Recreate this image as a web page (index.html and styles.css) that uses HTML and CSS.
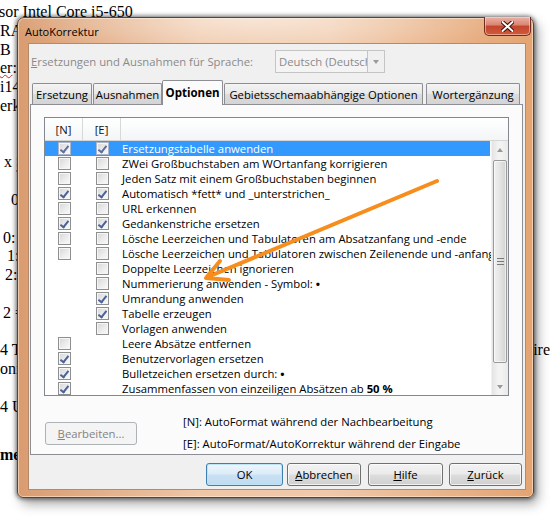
FILE: index.html
```html
<!DOCTYPE html>
<html lang="de">
<head>
<meta charset="utf-8">
<title>AutoKorrektur</title>
<link rel="stylesheet" href="styles.css">
</head>
<body>
<div class="doc">
  <p class="in-1">sor Intel Core i5-650</p>
  <p>RAM</p>
  <p>B&nbsp;&nbsp;I</p>
  <p><span class="wavy">er</span>:</p>
  <p>i14</p>
  <p>erk</p>
  <p></p>
  <p></p>
  <p class="in4">x <span class="wavy">S</span></p>
  <p></p>
  <p class="in11">0</p>
  <p></p>
  <p class="in3">0:</p>
  <p class="in7">1:</p>
  <p class="in5">2:</p>
  <p></p>
  <p class="in3">2 =</p>
  <p></p>
  <p class="split"><span>4 T</span><span>ire</span></p>
  <p>oni</p>
  <p></p>
  <p>4 U</p>
  <p></p>
  <p class="bold">me</p>
</div>

<div class="win">
  <div class="titlebar">
    <span class="title">AutoKorrektur</span>
    <span class="close">
      <svg width="13" height="11" viewBox="0 0 13 11"><path d="M1.5 1 L11.5 10 M11.5 1 L1.5 10" stroke="#3a1008" stroke-width="4" stroke-linecap="round"/><path d="M1.5 1 L11.5 10 M11.5 1 L1.5 10" stroke="#fff" stroke-width="2" stroke-linecap="round"/></svg>
    </span>
  </div>
  <div class="client">
    <div class="langrow">
      <span class="lbl"><u>E</u>rsetzungen und Ausnahmen für Sprache:</span>
      <div class="combo"><span class="ctext">Deutsch (Deutsch</span><span class="drop"><i class="tri-down"></i></span></div>
    </div>
    <div class="tabs">
      <span class="tab t1">Ersetzung</span>
      <span class="tab t2">Ausnahmen</span>
      <span class="tab t3 active">Optionen</span>
      <span class="tab t4">Gebietsschemaabhängige Optionen</span>
      <span class="tab t5">Wortergänzung</span>
    </div>
    <div class="panel">
      <div class="list">
        <div class="lhead"><span class="hc">[N]</span><span class="hc">[E]</span><span class="hrest"></span></div>
        <div class="lbody">
          <div class="rows">
            <div class="row sel"><span class="c"><i class="cb on"></i></span><span class="c"><i class="cb on"></i></span><span class="t">Ersetzungstabelle anwenden</span></div>
            <div class="row"><span class="c"><i class="cb"></i></span><span class="c"><i class="cb"></i></span><span class="t">ZWei Großbuchstaben am WOrtanfang korrigieren</span></div>
            <div class="row"><span class="c"><i class="cb"></i></span><span class="c"><i class="cb"></i></span><span class="t">Jeden Satz mit einem Großbuchstaben beginnen</span></div>
            <div class="row"><span class="c"><i class="cb on"></i></span><span class="c"><i class="cb on"></i></span><span class="t">Automatisch *fett* und _unterstrichen_</span></div>
            <div class="row"><span class="c"><i class="cb"></i></span><span class="c"><i class="cb"></i></span><span class="t">URL erkennen</span></div>
            <div class="row"><span class="c"><i class="cb on"></i></span><span class="c"><i class="cb on"></i></span><span class="t">Gedankenstriche ersetzen</span></div>
            <div class="row"><span class="c"><i class="cb"></i></span><span class="c"><i class="cb"></i></span><span class="t">Lösche Leerzeichen und Tabulatoren am Absatzanfang und -ende</span></div>
            <div class="row"><span class="c"><i class="cb"></i></span><span class="c"><i class="cb"></i></span><span class="t">Lösche Leerzeichen und Tabulatoren zwischen Zeilenende und -anfang</span></div>
            <div class="row"><span class="c"></span><span class="c"><i class="cb"></i></span><span class="t">Doppelte Leerzeichen ignorieren</span></div>
            <div class="row"><span class="c"></span><span class="c"><i class="cb"></i></span><span class="t">Nummerierung anwenden - Symbol: <b>•</b></span></div>
            <div class="row"><span class="c"></span><span class="c"><i class="cb on"></i></span><span class="t">Umrandung anwenden</span></div>
            <div class="row"><span class="c"></span><span class="c"><i class="cb on"></i></span><span class="t">Tabelle erzeugen</span></div>
            <div class="row"><span class="c"></span><span class="c"><i class="cb"></i></span><span class="t">Vorlagen anwenden</span></div>
            <div class="row"><span class="c"><i class="cb"></i></span><span class="c"></span><span class="t">Leere Absätze entfernen</span></div>
            <div class="row"><span class="c"><i class="cb on"></i></span><span class="c"></span><span class="t">Benutzervorlagen ersetzen</span></div>
            <div class="row"><span class="c"><i class="cb on"></i></span><span class="c"></span><span class="t">Bulletzeichen ersetzen durch: <b>•</b></span></div>
            <div class="row"><span class="c"><i class="cb on"></i></span><span class="c"></span><span class="t">Zusammenfassen von einzeiligen Absätzen ab <b>50 %</b></span></div>
          </div>
          <div class="sb">
            <span class="sbbtn"><i class="tri-up"></i></span>
            <span class="track"><span class="thumb"><i class="grip"></i></span></span>
            <span class="sbbtn"><i class="tri-down"></i></span>
          </div>
        </div>
      </div>
      <div class="below">
        <span class="btn dis edit"><u>B</u>earbeiten...</span>
        <div class="notes">
          <p>[N]: AutoFormat während der Nachbearbeitung</p>
          <p>[E]: AutoFormat/AutoKorrektur während der Eingabe</p>
        </div>
      </div>
    </div>
    <div class="btnrow">
      <span class="btn def b-ok">OK</span>
      <span class="btn b-ab"><u>A</u>bbrechen</span>
      <span class="btn b-hi"><u>H</u>ilfe</span>
      <span class="btn b-zu"><u>Z</u>urück</span>
    </div>
  </div>
</div>

<svg class="arrow" width="550" height="522" viewBox="0 0 550 522">
  <g fill="none" stroke="#f68d1c" stroke-width="4" stroke-linecap="round" stroke-linejoin="round">
    <path d="M437 181 L210 276"/>
    <path d="M220 261 L206 278 L229 280"/>
  </g>
</svg>
</body>
</html>
```

FILE: styles.css
```css
* { box-sizing: border-box; margin: 0; padding: 0; }
html, body { width: 550px; height: 522px; overflow: hidden; background: #fff; }
body { position: relative; font-family: "Open Sans", "Noto Sans", sans-serif; font-size: 11.3px; color: #000; }

/* background document */
.doc { font-family: "Liberation Serif", serif; font-size: 16px; line-height: 18.8px; padding-top: 3px; }
.doc p { height: 18.8px; white-space: nowrap; }
.doc .in-1 { text-indent: -1px; }
.doc .in3 { text-indent: 3px; }
.doc .in4 { text-indent: 4px; }
.doc .in5 { text-indent: 5px; }
.doc .in7 { text-indent: 7px; }
.doc .in11 { text-indent: 11px; }
.doc .split { display: flex; justify-content: space-between; }
.doc .bold { font-weight: bold; margin-top: 11px; }
.wavy { text-decoration: underline wavy #d02020; text-decoration-thickness: 1px; }

/* window */
.win {
  position: absolute; left: 17px; top: 17px; width: 517px; height: 481px;
  display: flex; flex-direction: column;
  border: 1px solid #5a4335; border-radius: 7px 7px 6px 6px;
  background:
    radial-gradient(ellipse 260px 40px at 46% 0, rgba(255,255,255,.55), rgba(255,255,255,0)),
    linear-gradient(90deg, #d99c70 0%, #efc6a6 35%, #f0c9aa 60%, #e4a472 100%);
  box-shadow: inset 0 0 0 1px rgba(255,240,225,.55), 0 0 4px 1px rgba(0,0,0,.55), 4px 6px 12px rgba(0,0,0,.35);
}
.titlebar { height: 26px; display: flex; align-items: flex-start; }
.title { padding: 6px 0 0 7px; font-size: 11px; color: #000; }
.close {
  margin: -1px 2px 0 auto; width: 47px; height: 19px;
  display: flex; align-items: center; justify-content: center;
  border: 1px solid #6e2b1e; border-top: none; border-radius: 0 0 5px 5px;
  background: linear-gradient(#eab2a4 0%, #d98473 45%, #c4452c 50%, #cf5a3c 100%);
  box-shadow: inset 0 0 0 1px rgba(255,220,210,.55);
}

.client {
  margin: 0 8px 8px 11px; flex: 1;
  background: #f0f0f0; display: flex; flex-direction: column;
  box-shadow: 0 0 0 1px #b48a6a;
}
.langrow { margin-top: 6px; height: 23px; display: flex; align-items: center; padding-left: 2px; }
.lbl { flex: 0 0 244px; color: #8a8a8a; }
.combo {
  width: 110px; height: 23px; display: flex; align-items: center;
  border: 1px solid #c5c5c5; background: #f4f4f4; color: #8a8a8a;
}
.ctext { flex: 1; padding-left: 3px; white-space: nowrap; overflow: hidden; }
.drop {
  width: 17px; height: 21px; display: flex; align-items: center; justify-content: center;
  border-left: 1px solid #c5c5c5; background: #f0f0f0;
}
.tri-down { width: 0; height: 0; border-left: 3.5px solid transparent; border-right: 3.5px solid transparent; border-top: 4px solid #9a9a9a; }
.tri-up { width: 0; height: 0; border-left: 3.5px solid transparent; border-right: 3.5px solid transparent; border-bottom: 4px solid #9a9a9a; }

.tabs { margin-top: 7px; height: 24px; display: flex; align-items: flex-end; padding-left: 3px; }
.tab {
  height: 21px; display: flex; align-items: center; justify-content: center;
  border: 1px solid #8c8e94; border-bottom: none; border-radius: 2px 2px 0 0;
  background: linear-gradient(#f4f4f4, #e8e8e8 50%, #dcdcdc 51%, #d4d4d4);
  white-space: nowrap; padding-top: 1px;
}
.t1 { width: 60px; }
.t2 { width: 69px; margin-left: 1px; }
.t3 { width: 61px; }
.t4 { width: 199px; margin-left: 1px; }
.t5 { width: 94px; margin-left: 3px; }
.tab.active {
  height: 25px; margin-bottom: -1px; position: relative; z-index: 1;
  background: #fbfbfb; font-weight: bold; font-size: 11.5px; padding-top: 0; padding-bottom: 2px;
}

.panel {
  margin-left: 1px; width: 493px; height: 351px;
  border: 1px solid #8c8e94; background: #fbfbfb;
  display: flex; flex-direction: column;
}
.list {
  margin: 12px 0 0 13px; width: 465px; height: 279px;
  border: 1px solid #828790; background: #fff;
  display: flex; flex-direction: column;
}
.lhead { height: 23px; display: flex; border-bottom: 1px solid #d5d5d5; background: linear-gradient(#ffffff, #f4f5f7); flex: none; }
.hc { width: 38px; display: flex; align-items: center; justify-content: center; border-right: 1px solid #d8d8d8; color: #111; }
.hrest { flex: 1; }
.lbody { flex: 1; display: flex; min-height: 0; }
.rows { flex: 1; overflow: hidden; }
.row { height: 15px; display: flex; align-items: center; white-space: nowrap; }
.row.sel { background: #3399ff; color: #fff; margin-right: 1px; }
.c { width: 38px; flex: none; display: flex; justify-content: center; align-items: center; }
.t { padding-left: 1px; }

.cb {
  display: block; width: 13px; height: 13px; position: relative;
  border: 1px solid #8e8f8f;
  background: linear-gradient(135deg, #d6d6d6 0%, #ececec 55%, #fbfbfb 100%);
  box-shadow: inset 0 0 0 1px #f6f6f6;
}
.cb.on::after {
  content: ""; position: absolute; left: 3.5px; top: 1px; width: 3px; height: 7px;
  border-right: 2px solid #4b619a; border-bottom: 2px solid #4b619a;
  transform: rotate(38deg);
}
.sel .cb { border-color: #a9b6cc; }
.sel .cb.on::after { border-color: #5e6f99; }

.sb { width: 17px; flex: none; display: flex; flex-direction: column; background: linear-gradient(90deg, #e4e4e4, #f3f3f3 40%, #f3f3f3 60%, #e9e9e9); border-left: 1px solid #f0f0f0; }
.sbbtn { height: 17px; display: flex; align-items: center; justify-content: center; flex: none; }
.track { flex: 1; display: flex; flex-direction: column; padding: 2px 1px 15px 1px; }
.thumb {
  flex: 1; border: 1px solid #9a9a9a; border-radius: 2px;
  background: linear-gradient(90deg, #f1f1f1, #e4e4e4 50%, #d3d3d3);
  display: flex; align-items: center; justify-content: center;
  box-shadow: inset 0 0 0 1px rgba(255,255,255,.6);
}
.grip { display: block; width: 7px; height: 7px; border-top: 1px solid #7a7a7a; border-bottom: 1px solid #7a7a7a; position: relative; }
.grip::after { content: ""; position: absolute; left: 0; right: 0; top: 2px; border-top: 1px solid #7a7a7a; }

.below { margin-top: 15px; display: flex; align-items: center; }
.btn {
  height: 23px; display: flex; align-items: center; justify-content: center;
  border: 1px solid #707070; border-radius: 3px;
  background: linear-gradient(#f2f2f2 0%, #ebebeb 48%, #dddddd 52%, #cfcfcf 100%);
  box-shadow: inset 0 0 0 1px rgba(255,255,255,.7);
  white-space: nowrap;
}
.btn.dis { border-color: #adb2b5; background: #f4f4f4; color: #838383; box-shadow: none; }
.edit { margin-left: 14px; width: 92px; }
.notes { margin-left: 46px; line-height: 22px; }

.btnrow { margin-top: 8px; display: flex; justify-content: flex-end; padding-right: 3px; }
.btn.def { border-color: #3c7fb1; background: linear-gradient(#eef6fc 0%, #dcecf8 48%, #c9e1f4 52%, #bfdaf0 100%); box-shadow: inset 0 0 0 1px #bfe4f8; }
.b-ok { width: 77px; }
.b-ab { width: 74px; margin-left: 4px; }
.b-hi { width: 75px; margin-left: 7px; }
.b-zu { width: 73px; margin-left: 6px; }

.arrow { position: absolute; left: 0; top: 0; pointer-events: none; }
```
